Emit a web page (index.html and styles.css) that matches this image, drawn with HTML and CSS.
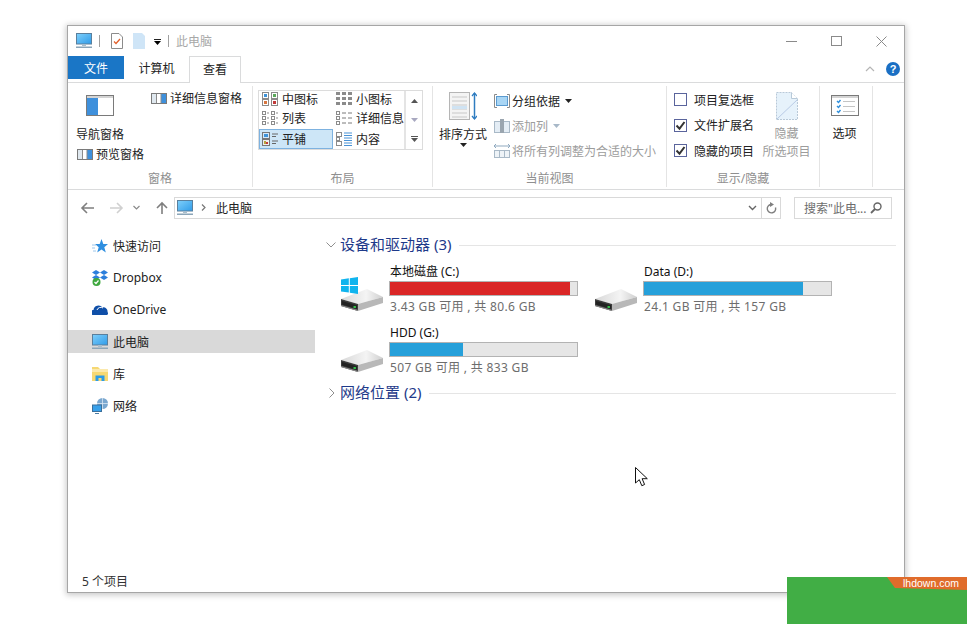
FILE: index.html
```html
<!DOCTYPE html>
<html lang="zh-CN">
<head>
<meta charset="utf-8">
<title>此电脑</title>
<link rel="stylesheet" href="styles.css">
</head>
<body>
<svg class="defs" width="0" height="0" aria-hidden="true">
  <defs>
    <linearGradient id="screen" x1="0" y1="0" x2="1" y2="1"><stop offset="0" stop-color="#7fd0fb"/><stop offset="1" stop-color="#2f9be8"/></linearGradient>
    <linearGradient id="hdd" x1="0" y1="0" x2="1" y2="0"><stop offset="0" stop-color="#d8d8d8"/><stop offset=".6" stop-color="#f4f4f4"/><stop offset="1" stop-color="#cfcfcf"/></linearGradient>
    <symbol id="pc" viewBox="0 0 16 16"><rect x="0.5" y="0.5" width="15" height="10.5" fill="url(#screen)" stroke="#5a7f9c"/><rect x="6" y="11" width="4" height="2" fill="#a9bdcb"/><rect x="0" y="13.5" width="16" height="1.5" fill="#8ba5b8"/></symbol>
    <symbol id="drive" viewBox="0 0 42 22"><polygon points="0,10 26,0 42,8 17,15" fill="url(#hdd)"/><polygon points="0,10 17,15 17,22 0,17" fill="#3c3c3c"/><polygon points="17,15 42,8 42,14 17,22" fill="#b8b8b8"/><polygon points="1,12 16,16.300 16,20 1,15.500" fill="#222"/><rect x="12.500" y="17" width="2.400" height="2" fill="#35c04a"/><polygon points="0,17 17,22 17,21 0,16" fill="#8d8d8d"/></symbol>
    <symbol id="grid3" viewBox="0 0 16 14"><g fill="none" stroke="#8b8b8b"><rect x="0.5" y="0.5" width="6" height="6"/><rect x="9.5" y="0.5" width="6" height="6"/><rect x="0.5" y="7.5" width="6" height="6"/><rect x="9.5" y="7.5" width="6" height="6"/></g><rect x="2" y="2" width="3" height="3" fill="#3f93d8"/><rect x="11" y="2" width="3" height="3" fill="#5aa85a"/><rect x="2" y="9" width="3" height="3" fill="#d8763f"/><rect x="11" y="9" width="3" height="3" fill="#c23a3a"/></symbol>
    <symbol id="dots" viewBox="0 0 16 14"><g fill="#8b8b8b"><rect x="0" y="0" width="4" height="3"/><rect x="6" y="0" width="4" height="3"/><rect x="12" y="0" width="4" height="3"/><rect x="0" y="5" width="4" height="3"/><rect x="6" y="5" width="4" height="3"/><rect x="12" y="5" width="4" height="3"/><rect x="0" y="10" width="4" height="3"/><rect x="6" y="10" width="4" height="3"/><rect x="12" y="10" width="4" height="3"/></g></symbol>
    <symbol id="listi" viewBox="0 0 16 14"><g fill="none" stroke="#8b8b8b"><rect x="0.5" y="0.5" width="3" height="3"/><rect x="0.5" y="5.5" width="3" height="3"/><rect x="0.5" y="10.5" width="3" height="3"/><rect x="9.5" y="0.5" width="3" height="3"/><rect x="9.5" y="5.5" width="3" height="3"/><rect x="9.5" y="10.5" width="3" height="3"/></g><path d="M5 2h2M5 7h2M5 12h2M14 2h2M14 7h2M14 12h2" stroke="#8b8b8b"/></symbol>
    <symbol id="detail" viewBox="0 0 16 14"><g fill="none" stroke="#8b8b8b"><rect x="0.5" y="0.5" width="3" height="3"/><rect x="0.5" y="5.5" width="3" height="3"/><rect x="0.5" y="10.5" width="3" height="3"/></g><path d="M6 2h4M12 2h4M6 7h4M12 7h4M6 12h4M12 12h4" stroke="#7a7a7a"/></symbol>
    <symbol id="tile" viewBox="0 0 16 14"><rect x="0.5" y="0.5" width="7" height="6" fill="#d6e9f8" stroke="#777"/><rect x="0.5" y="7.5" width="7" height="6" fill="#eee" stroke="#777"/><rect x="2" y="2" width="4" height="3" fill="#3f93d8"/><rect x="2" y="9" width="2" height="3" fill="#b9a23c"/><rect x="4" y="10" width="2" height="2" fill="#c23a3a"/><path d="M10 2h6M10 4.500h4M10 9h6M10 11.500h4" stroke="#666"/></symbol>
    <symbol id="content" viewBox="0 0 16 14"><g fill="none" stroke="#8b8b8b"><rect x="0.5" y="0.5" width="5" height="4"/><rect x="0.5" y="5.500" width="3" height="3"/><rect x="0.5" y="9.500" width="5" height="4"/></g><path d="M8 1h8M8 3.500h8M8 6h8M8 8.500h8M8 11h8M8 13.500h8" stroke="#4a93d6"/></symbol>
    <symbol id="pane" viewBox="0 0 16 11"><rect x="0.500" y="0.500" width="15" height="10" fill="#fff" stroke="#7a7a7a"/><rect x="1" y="1" width="4" height="9" fill="#dfe8ef"/><rect x="10" y="1" width="5" height="9" fill="#3e90dc"/><path d="M5.500 1v9M10 1v9" stroke="#8b8b8b"/></symbol>
    <symbol id="down" viewBox="0 0 7 4"><polygon points="0,0 7,0 3.500,4"/></symbol>
    <symbol id="tick" viewBox="0 0 11 11"><path d="M1.500 5.500l3 3.200 5-6.700" fill="none" stroke="#333" stroke-width="2"/></symbol>
  </defs>
</svg>

<div class="window">
  <div class="titlebar">
    <svg class="i16" width="16" height="16"><use href="#pc"/></svg>
    <span class="tsep"></span>
    <svg class="qa-note" width="12" height="16" viewBox="0 0 12 16"><path d="M.5.500h7.500l3.500 3.500v11.500h-11z" fill="#fff" stroke="#8b8b8b"/><path d="M3 8.500l2 2 4-4.500" fill="none" stroke="#e2602b" stroke-width="1.300"/></svg>
    <svg class="qa-doc" width="12" height="16" viewBox="0 0 12 16"><path d="M0 0h9l3 3v13h-12z" fill="#cfe5f7"/></svg>
    <span class="qa-drop"><span class="qa-bar"></span><svg width="7" height="4"><use href="#down"/></svg></span>
    <span class="tsep"></span>
    <span class="ttl">此电脑</span>
    <span class="winctl">
      <svg width="11" height="11" viewBox="0 0 11 11"><path d="M0 5.500h11" stroke="#8a8a8a"/></svg>
      <svg width="11" height="11" viewBox="0 0 11 11"><rect x=".5" y=".5" width="10" height="9" fill="none" stroke="#8a8a8a"/></svg>
      <svg width="11" height="11" viewBox="0 0 11 11"><path d="M.5.500l10 10M10.500.500l-10 10" stroke="#8a8a8a"/></svg>
    </span>
  </div>

  <div class="tabs">
    <span class="tab tab-file">文件</span>
    <span class="tab tab-pc">计算机</span>
    <span class="tab tab-view">查看</span>
    <span class="tabs-right">
      <svg width="10" height="6" viewBox="0 0 10 6"><path d="M1 5l4-4 4 4" fill="none" stroke="#b5b5b5" stroke-width="1.200"/></svg>
      <span class="help">?</span>
    </span>
  </div>

  <div class="ribbon">
    <section class="group g-pane">
      <div class="gbody">
        <div class="pane-main">
          <svg class="nav-icon" width="28" height="21" viewBox="0 0 28 21"><rect x=".5" y=".5" width="27" height="20" fill="#fff" stroke="#7a7a7a"/><rect x="1" y="3" width="11" height="17" fill="#3e90dc"/><rect x="1" y="1" width="26" height="2" fill="#d4d4d4"/></svg>
          <div class="nav-label">导航窗格</div>
          <div class="rowline"><svg width="16" height="11"><use href="#pane"/></svg>预览窗格</div>
        </div>
        <div class="rowline pane-detail"><svg width="16" height="11"><use href="#pane"/></svg>详细信息窗格</div>
      </div>
      <div class="glabel">窗格</div>
    </section>

    <section class="group g-layout">
      <div class="gbody">
        <div class="gallery">
          <div class="gitems">
            <div class="gi gi-first"><svg width="16" height="14"><use href="#grid3"/></svg>中图标</div>
            <div class="gi gi-first"><svg width="16" height="14"><use href="#dots"/></svg>小图标</div>
            <div class="gi"><svg width="16" height="14"><use href="#listi"/></svg>列表</div>
            <div class="gi"><svg width="16" height="14"><use href="#detail"/></svg>详细信息</div>
            <div class="gi gi-sel"><svg width="16" height="14"><use href="#tile"/></svg>平铺</div>
            <div class="gi gi-last"><svg width="16" height="14"><use href="#content"/></svg>内容</div>
          </div>
          <div class="gscroll">
            <svg width="7" height="4" viewBox="0 0 7 4"><polygon points="3.500,0 7,4 0,4" fill="#555"/></svg>
            <svg width="7" height="4" viewBox="0 0 7 4"><polygon points="0,0 7,0 3.500,4" fill="#a8a8c0"/></svg>
            <svg width="7" height="7" viewBox="0 0 7 7"><path d="M0 .500h7" stroke="#555"/><polygon points="0,2 7,2 3.500,6" fill="#555"/></svg>
          </div>
        </div>
      </div>
      <div class="glabel">布局</div>
    </section>

    <section class="group g-view">
      <div class="gbody">
        <div class="sort">
          <svg class="sort-icon" width="28" height="28" viewBox="0 0 28 28"><rect x=".5" y=".5" width="20" height="27" fill="#f4f4f4" stroke="#b5b5b5"/><path d="M3 5h15M3 9h15M3 13h15M3 17h15M3 21h15M3 25h15" stroke="#c8c8c8"/><rect x="3" y="14" width="15" height="3" fill="#cfe3f3"/><path d="M25.500 1v26" stroke="#2e7cc0" stroke-width="1.500"/><path d="M23 4l2.500-3 2.500 3M23 24l2.500 3 2.500-3" fill="none" stroke="#2e7cc0" stroke-width="1.300"/></svg>
          <div class="sort-label">排序方式</div>
          <svg class="sort-arrow" width="7" height="4"><use href="#down"/></svg>
        </div>
        <div class="view-col">
          <div class="rowline vrow"><svg width="16" height="14" viewBox="0 0 16 14"><path d="M3 .5H.5v13H3M13 .5h2.500v13H13" fill="none" stroke="#8b8b8b"/><rect x="2.500" y="2.500" width="11" height="9" fill="#a9d6f5" stroke="#5b9bd0"/></svg>分组依据<svg class="m4" width="7" height="4"><use href="#down"/></svg></div>
          <div class="rowline vrow off"><svg width="16" height="14" viewBox="0 0 16 14"><rect x=".5" y="2.500" width="15" height="11" fill="#e4edf5" stroke="#a9b9c7"/><rect x="6" y="0" width="4" height="14" fill="#9aa5af"/></svg>添加列<svg class="m4" width="7" height="4"><use href="#down"/></svg></div>
          <div class="rowline vrow off"><svg width="16" height="15" viewBox="0 0 16 15"><path d="M0 3h16M2 1L0 3l2 2M14 1l2 2-2 2" fill="none" stroke="#8fa9bf"/><rect x=".5" y="7.500" width="15" height="7" fill="#eef3f7" stroke="#a9b9c7"/><path d="M5.500 8v6M10.500 8v6" stroke="#a9b9c7"/></svg>将所有列调整为合适的大小</div>
        </div>
      </div>
      <div class="glabel">当前视图</div>
    </section>

    <section class="group g-show">
      <div class="gbody">
        <div class="checks">
          <label class="chk"><span class="box"></span>项目复选框</label>
          <label class="chk"><span class="box"><svg width="11" height="11"><use href="#tick"/></svg></span>文件扩展名</label>
          <label class="chk"><span class="box"><svg width="11" height="11"><use href="#tick"/></svg></span>隐藏的项目</label>
        </div>
        <div class="hide">
          <svg class="hide-icon" width="22" height="28" viewBox="0 0 22 28"><path d="M.5 27.500V.5h15l6 6v21z" fill="#e6f2fb" stroke="#b8c9d8" stroke-dasharray="2 1"/><path d="M1 27L21 8" stroke="#b9cbe6"/><path d="M15.500.5v6h6" fill="#fff" stroke="#b8c9d8"/></svg>
          <div class="hide-a">隐藏</div>
          <div class="hide-b">所选项目</div>
        </div>
      </div>
      <div class="glabel">显示/隐藏</div>
    </section>

    <section class="group g-opt">
      <div class="gbody">
        <div class="opt">
          <svg width="28" height="21" viewBox="0 0 28 21"><rect x=".5" y=".5" width="27" height="20" fill="#fff" stroke="#7a7a7a"/><rect x="1" y="1" width="26" height="2" fill="#d4d4d4"/><path d="M6 6l1.500 1.500 2-2.500M6 11l1.500 1.500 2-2.500M6 16l1.500 1.500 2-2.500" fill="none" stroke="#2e8fdc" stroke-width="1.400"/><path d="M12 6.500h12M12 11.500h12M12 16.500h12" stroke="#c4c4c4"/></svg>
          <div class="opt-label">选项</div>
        </div>
      </div>
      <div class="glabel">&nbsp;</div>
    </section>
  </div>

  <div class="addr">
    <svg class="nav-b" width="14" height="12" viewBox="0 0 14 12"><path d="M14 6H2M7 1L2 6l5 5" fill="none" stroke="#7f7f7f" stroke-width="1.600"/></svg>
    <svg class="nav-f" width="14" height="12" viewBox="0 0 14 12"><path d="M0 6h12M7 1l5 5-5 5" fill="none" stroke="#d0d0d0" stroke-width="1.600"/></svg>
    <svg class="nav-d" width="7" height="5" viewBox="0 0 7 5"><path d="M.5 1l3 3 3-3" fill="none" stroke="#8a8a8a" stroke-width="1.200"/></svg>
    <svg class="nav-u" width="12" height="13" viewBox="0 0 12 13"><path d="M6 13V2M1 7l5-5 5 5" fill="none" stroke="#7f7f7f" stroke-width="1.600"/></svg>
    <div class="addrbox">
      <svg width="16" height="16"><use href="#pc"/></svg>
      <svg class="crumb" width="5" height="7" viewBox="0 0 5 7"><path d="M1 .5l3 3-3 3" fill="none" stroke="#777" stroke-width="1.200"/></svg>
      <span class="addrtext">此电脑</span>
      <svg class="addr-chev" width="9" height="6" viewBox="0 0 9 6"><path d="M1 1l3.500 3.500L8 1" fill="none" stroke="#666" stroke-width="1.400"/></svg>
      <span class="refresh"><svg width="11" height="12" viewBox="0 0 11 12"><path d="M5 2.500a4.200 4.200 0 1 0 4.500 3" fill="none" stroke="#7f7f7f" stroke-width="1.400"/><polygon points="4,0 8,2.500 4,5" fill="#7f7f7f"/></svg></span>
    </div>
    <div class="search">
      <span>搜索"此电...</span>
      <svg width="12" height="12" viewBox="0 0 12 12"><circle cx="7.500" cy="4.500" r="3.500" fill="none" stroke="#666" stroke-width="1.400"/><path d="M5 7l-4 4" stroke="#666" stroke-width="1.800"/></svg>
    </div>
  </div>

  <div class="main">
    <nav class="side">
      <div class="sitem"><svg width="16" height="16" viewBox="0 0 16 16"><polygon points="9.500,1 11.300,6 16,6 12.300,9.200 13.800,14.500 9.500,11.400 5.200,14.500 6.700,9.200 3,6 7.700,6" fill="#2f8fe0"/><path d="M0 7h4M0 10h3M1 13h3" stroke="#9cc6ea"/></svg>快速访问</div>
      <div class="sitem"><svg width="16" height="16" viewBox="0 0 16 16"><g fill="#2c7fdc"><polygon points="4,0 8,2.500 4,5 0,2.500"/><polygon points="12,0 16,2.500 12,5 8,2.500"/><polygon points="4,5 8,7.500 4,10 0,7.500"/><polygon points="12,5 16,7.500 12,10 8,7.500"/></g><circle cx="4.500" cy="12" r="4" fill="#3fa83f"/><path d="M2.500 12l1.500 1.500 2.500-3" fill="none" stroke="#fff" stroke-width="1.200"/></svg>Dropbox</div>
      <div class="sitem"><svg width="16" height="16" viewBox="0 0 16 16"><path d="M1 13a2.500 2.500 0 0 1 .5-5 5 5 0 0 1 9-2.500 4 4 0 0 1 5 4.500 2 2 0 0 1-.5 3z" fill="#0f4fa8"/><path d="M5 8a4 4 0 0 1 6-2" fill="none" stroke="#fff"/></svg>OneDrive</div>
      <div class="sitem sel"><svg width="16" height="16"><use href="#pc"/></svg>此电脑</div>
      <div class="sitem"><svg width="16" height="16" viewBox="0 0 16 16"><path d="M0 1h6l2 2h8v12H0z" fill="#f6d873"/><rect x="0" y="3" width="16" height="3" fill="#fbe9ad"/><path d="M3.500 15V9.500h9V15h-3v-3h-3v3z" fill="#2a9be8"/></svg>库</div>
      <div class="sitem"><svg width="16" height="16" viewBox="0 0 16 16"><circle cx="10.500" cy="5.500" r="5.500" fill="#7aa7cf"/><path d="M10.500 0v11M5 5.500h11" stroke="#dbe7f2" stroke-width=".8"/><rect x=".5" y="7" width="9" height="6.500" fill="#37a0ea" stroke="#3a6f9a"/><path d="M3 15.500h4" stroke="#4b7da5"/></svg>网络</div>
    </nav>
    <div class="content">
      <div class="ghead">
        <svg width="10" height="6" viewBox="0 0 10 6"><path d="M.5.500L5 5 9.500.5" fill="none" stroke="#8f8f8f"/></svg>
        <span class="gtitle">设备和驱动器 (3)</span><span class="gline"></span>
      </div>
      <div class="tiles">
        <div class="dtile">
          <div class="dicon">
            <svg class="winlogo" width="17" height="17" viewBox="0 0 17 17"><polygon points="0,2.500 7.800,1.300 7.800,8 0,8" fill="#10b4ee"/><polygon points="8.800,1.200 17,0 17,8 8.800,8" fill="#10b4ee"/><polygon points="0,9 7.800,9 7.800,15.600 0,14.500" fill="#10b4ee"/><polygon points="8.800,9 17,9 17,17 8.800,15.800" fill="#10b4ee"/></svg>
            <svg width="42" height="22"><use href="#drive"/></svg>
          </div>
          <div class="dinfo">
            <div class="dname">本地磁盘 (C:)</div>
            <div class="bar"><div class="fill red" style="width:96%"></div></div>
            <div class="dsub">3.43 GB 可用 , 共 80.6 GB</div>
          </div>
        </div>
        <div class="dtile">
          <div class="dicon"><svg width="42" height="22"><use href="#drive"/></svg></div>
          <div class="dinfo">
            <div class="dname">Data (D:)</div>
            <div class="bar"><div class="fill" style="width:85%"></div></div>
            <div class="dsub">24.1 GB 可用 , 共 157 GB</div>
          </div>
        </div>
        <div class="dtile">
          <div class="dicon"><svg width="42" height="22"><use href="#drive"/></svg></div>
          <div class="dinfo">
            <div class="dname">HDD (G:)</div>
            <div class="bar"><div class="fill" style="width:39%"></div></div>
            <div class="dsub">507 GB 可用 , 共 833 GB</div>
          </div>
        </div>
      </div>
      <div class="ghead ghead2">
        <svg width="6" height="10" viewBox="0 0 6 10"><path d="M.5.500L5 5 .5 9.500" fill="none" stroke="#8f8f8f"/></svg>
        <span class="gtitle">网络位置 (2)</span><span class="gline"></span>
      </div>
    </div>
  </div>

  <div class="status">5 个项目</div>
</div>

<svg class="cursor" width="13" height="20" viewBox="0 0 13 20"><path d="M.5.500v15.500l3.800-3.300 2.500 6 2.800-1.200-2.500-5.800h5.200z" fill="#fff" stroke="#111"/></svg>

<div class="badge"><div class="badge-tab">lhdown.com</div></div>
</body>
</html>
```
FILE: styles.css
```css
* { box-sizing: border-box; }
html, body { margin: 0; padding: 0; height: 630px; overflow: hidden; background: #fff; }
body {
  position: relative;
  padding: 25px 0 0 67px;
  font-family: "Noto Sans", "Noto Sans CJK SC", sans-serif;
  font-size: 12px;
  color: #222;
}
svg { display: block; flex: none; }
.defs { position: absolute; }

.window {
  width: 838px;
  height: 568px;
  background: #fff;
  border: 1px solid #a6a6a6;
  box-shadow: 0 1px 6px 1px rgba(0,0,0,.22);
  display: flex;
  flex-direction: column;
}

.titlebar { height: 30px; flex: none; display: flex; align-items: center; padding-left: 8px; }
.tsep { width: 1px; height: 12px; background: #a0a0a0; margin: 0 7px; }
.qa-note { margin: 0 0 0 4px; }
.qa-doc { margin-left: 10px; }
.qa-drop { display: flex; flex-direction: column; gap: 1px; margin-left: 9px; margin-top: 2px; }
.qa-bar { width: 7px; height: 1px; background: #222; }
.ttl { color: #a8a8a8; margin-left: 0; }
.winctl { margin-left: auto; display: flex; gap: 34px; margin-right: 17px; }

.tabs { height: 27px; flex: none; display: flex; align-items: flex-start; border-bottom: 1px solid #dadbdc; }
.tab { height: 23px; display: flex; align-items: center; justify-content: center; }
.tab-file { width: 56px; background: #1a76c6; color: #fff; }
.tab-pc { width: 65px; }
.tab-view { width: 52px; height: 27px; padding-bottom: 3px; background: #fff; border: 1px solid #dadbdc; border-bottom: 0; position: relative; z-index: 1; }
.tabs-right { display: flex; align-items: center; gap: 11px; margin: 6px 4px 0 auto; }
.help { width: 14px; height: 14px; border-radius: 50%; background: #1a6fc4; color: #fff; font-weight: 700; font-size: 11px; line-height: 14px; text-align: center; font-family: "Liberation Sans", sans-serif; }

.ribbon { height: 107px; flex: none; display: flex; border-bottom: 1px solid #dadbdc; padding-top: 3px; padding-bottom: 2px; }
.group { display: flex; flex-direction: column; border-right: 1px solid #e4e4e4; }
.gbody { flex: 1; display: flex; min-height: 0; }
.glabel { height: 17px; flex: none; text-align: center; color: #8f8f8f; line-height: 17px; }
.g-pane { width: 185px; }
.g-layout { width: 180px; }
.g-view { width: 234px; }
.g-show { width: 153px; }
.g-opt { width: 53px; }

.rowline { display: flex; align-items: center; gap: 3px; height: 20px; white-space: nowrap; }
.pane-main { width: 83px; padding: 9px 0 0 8px; }
.nav-icon { margin-left: 10px; }
.nav-label { margin-top: 9px; height: 20px; line-height: 20px; }
.pane-main .rowline { margin-left: 1px; margin-top: -1px; }
.pane-detail { margin-top: 2px; }

.gallery { margin: 4px 0 0 5px; width: 165px; height: 60px; border: 1px solid #dcdcdc; display: flex; }
.gitems { flex: 1; display: grid; grid-template-columns: 74px 71px; grid-template-rows: 15px 23px 20px; }
.gi { display: flex; align-items: center; gap: 4px; padding-left: 2px; white-space: nowrap; overflow: hidden; }
.gi-sel { background: #cde6f7; border: 1px solid #7db2e0; padding-left: 1px; }
.gi svg { margin-left: 1px; }
.gscroll { width: 18px; border-left: 2px solid #e4e4e4; display: flex; flex-direction: column; align-items: center; justify-content: space-between; padding: 8px 0 6px; }

.sort { width: 60px; display: flex; flex-direction: column; align-items: center; padding: 6px 0 0; }
.sort-label { margin-top: 6px; height: 18px; line-height: 18px; white-space: nowrap; }
.sort-arrow { margin-top: -1px; fill: #222; }
.view-col { padding: 2px 0 0 1px; }
.vrow { height: 25px; gap: 2px; }
.m4 { margin-left: 3px; fill: #222; }
.off { color: #9c9c9c; }
.off .m4 { fill: #a8b8c8; }

.checks { padding: 1px 0 0 7px; width: 95px; }
.chk { display: flex; align-items: center; height: 25.500px; gap: 7px; white-space: nowrap; }
.box { width: 13px; height: 13px; border: 1px solid #5a649c; background: #fff; flex: none; display: flex; align-items: center; justify-content: center; }
.hide { width: 49px; display: flex; flex-direction: column; align-items: center; padding-top: 6px; color: #9c9c9c; white-space: nowrap; }
.hide-a { margin-top: 4px; height: 20px; line-height: 20px; }
.hide-b { height: 16px; line-height: 16px; }

.opt { width: 100%; display: flex; flex-direction: column; align-items: center; padding: 9px 3px 0 0; }
.opt-label { margin-top: 8px; line-height: 20px; }

.addr { height: 35px; flex: none; display: flex; align-items: center; padding: 0 12px 0 0; }
.nav-b { margin-left: 12px; }
.nav-f { margin-left: 16px; }
.nav-d { margin-left: 9px; }
.nav-u { margin-left: 16px; }
.addrbox { margin-left: 6px; width: 607px; height: 22px; border: 1px solid #d9d9d9; display: flex; align-items: center; padding-left: 2px; }
.crumb { margin-left: 8px; }
.addrtext { margin-left: 10px; }
.addr-chev { margin-left: auto; margin-right: 4px; }
.refresh { width: 19px; height: 20px; border-left: 1px solid #d9d9d9; display: flex; align-items: center; justify-content: center; }
.search { margin-left: 13px; width: 98px; height: 22px; border: 1px solid #d9d9d9; display: flex; align-items: center; justify-content: space-between; padding: 0 9px 0 9px; color: #6d6d6d; white-space: nowrap; }

.main { flex: 1; display: flex; min-height: 0; }
.side { width: 247px; flex: none; padding-top: 9px; display: flex; flex-direction: column; gap: 9px; }
.sitem { height: 23px; display: flex; align-items: center; gap: 5px; padding-left: 24px; }
.sitem.sel { background: #d9d9d9; }

.content { flex: 1; padding: 9px 8px 0 11px; }
.ghead { display: flex; align-items: center; height: 22px; }
.ghead svg { margin-right: 4px; margin-left: 0; }
.ghead2 svg { margin-left: 3px; margin-right: 5px; }
.gtitle { font-size: 15px; line-height: 20px; margin-bottom: 2px; color: #1e3a8a; white-space: nowrap; }
.gline { flex: 1; height: 1px; background: #e5e5e5; margin-left: 8px; }
.tiles { display: grid; grid-template-columns: 254px 254px; row-gap: 7px; margin-top: 7px; padding-left: 14px; }
.dtile { display: flex; height: 54px; }
.dicon { width: 49px; height: 54px; display: flex; flex-direction: column; justify-content: flex-end; padding-bottom: 6px; margin-left: 1px; margin-right: -1px; position: relative; }
.winlogo { position: absolute; left: 0; top: 14px; }
.dinfo { width: 189px; }
.dname { height: 18px; line-height: 18px; padding-left: 1px; white-space: nowrap; color: #111; }
.bar { height: 15px; background: #e6e6e6; border: 1px solid #b3b3b3; }
.fill { height: 100%; background: #26a0da; }
.fill.red { background: #da2626; }
.dsub { height: 22px; line-height: 22px; color: #6d6d6d; white-space: nowrap; padding-left: 1px; letter-spacing: .33px; }
.ghead2 { margin-top: 4px; }

.status { height: 22px; flex: none; padding: 1px 0 0 14px; line-height: 22px; color: #333; }

.cursor { position: absolute; left: 635px; top: 467px; }
.badge { position: absolute; left: 787px; top: 577px; width: 180px; height: 47px; background: #41ae45; }
.badge-tab {
  position: absolute; right: 0; top: 0; width: 80px; height: 13px;
  background: #e06c2b;
  clip-path: polygon(0 0, 100% 0, 100% 100%, 10% 85%);
  color: #fff; font: 10.500px/12px "Liberation Sans", sans-serif;
  text-align: right; padding-right: 8px;
}
```
